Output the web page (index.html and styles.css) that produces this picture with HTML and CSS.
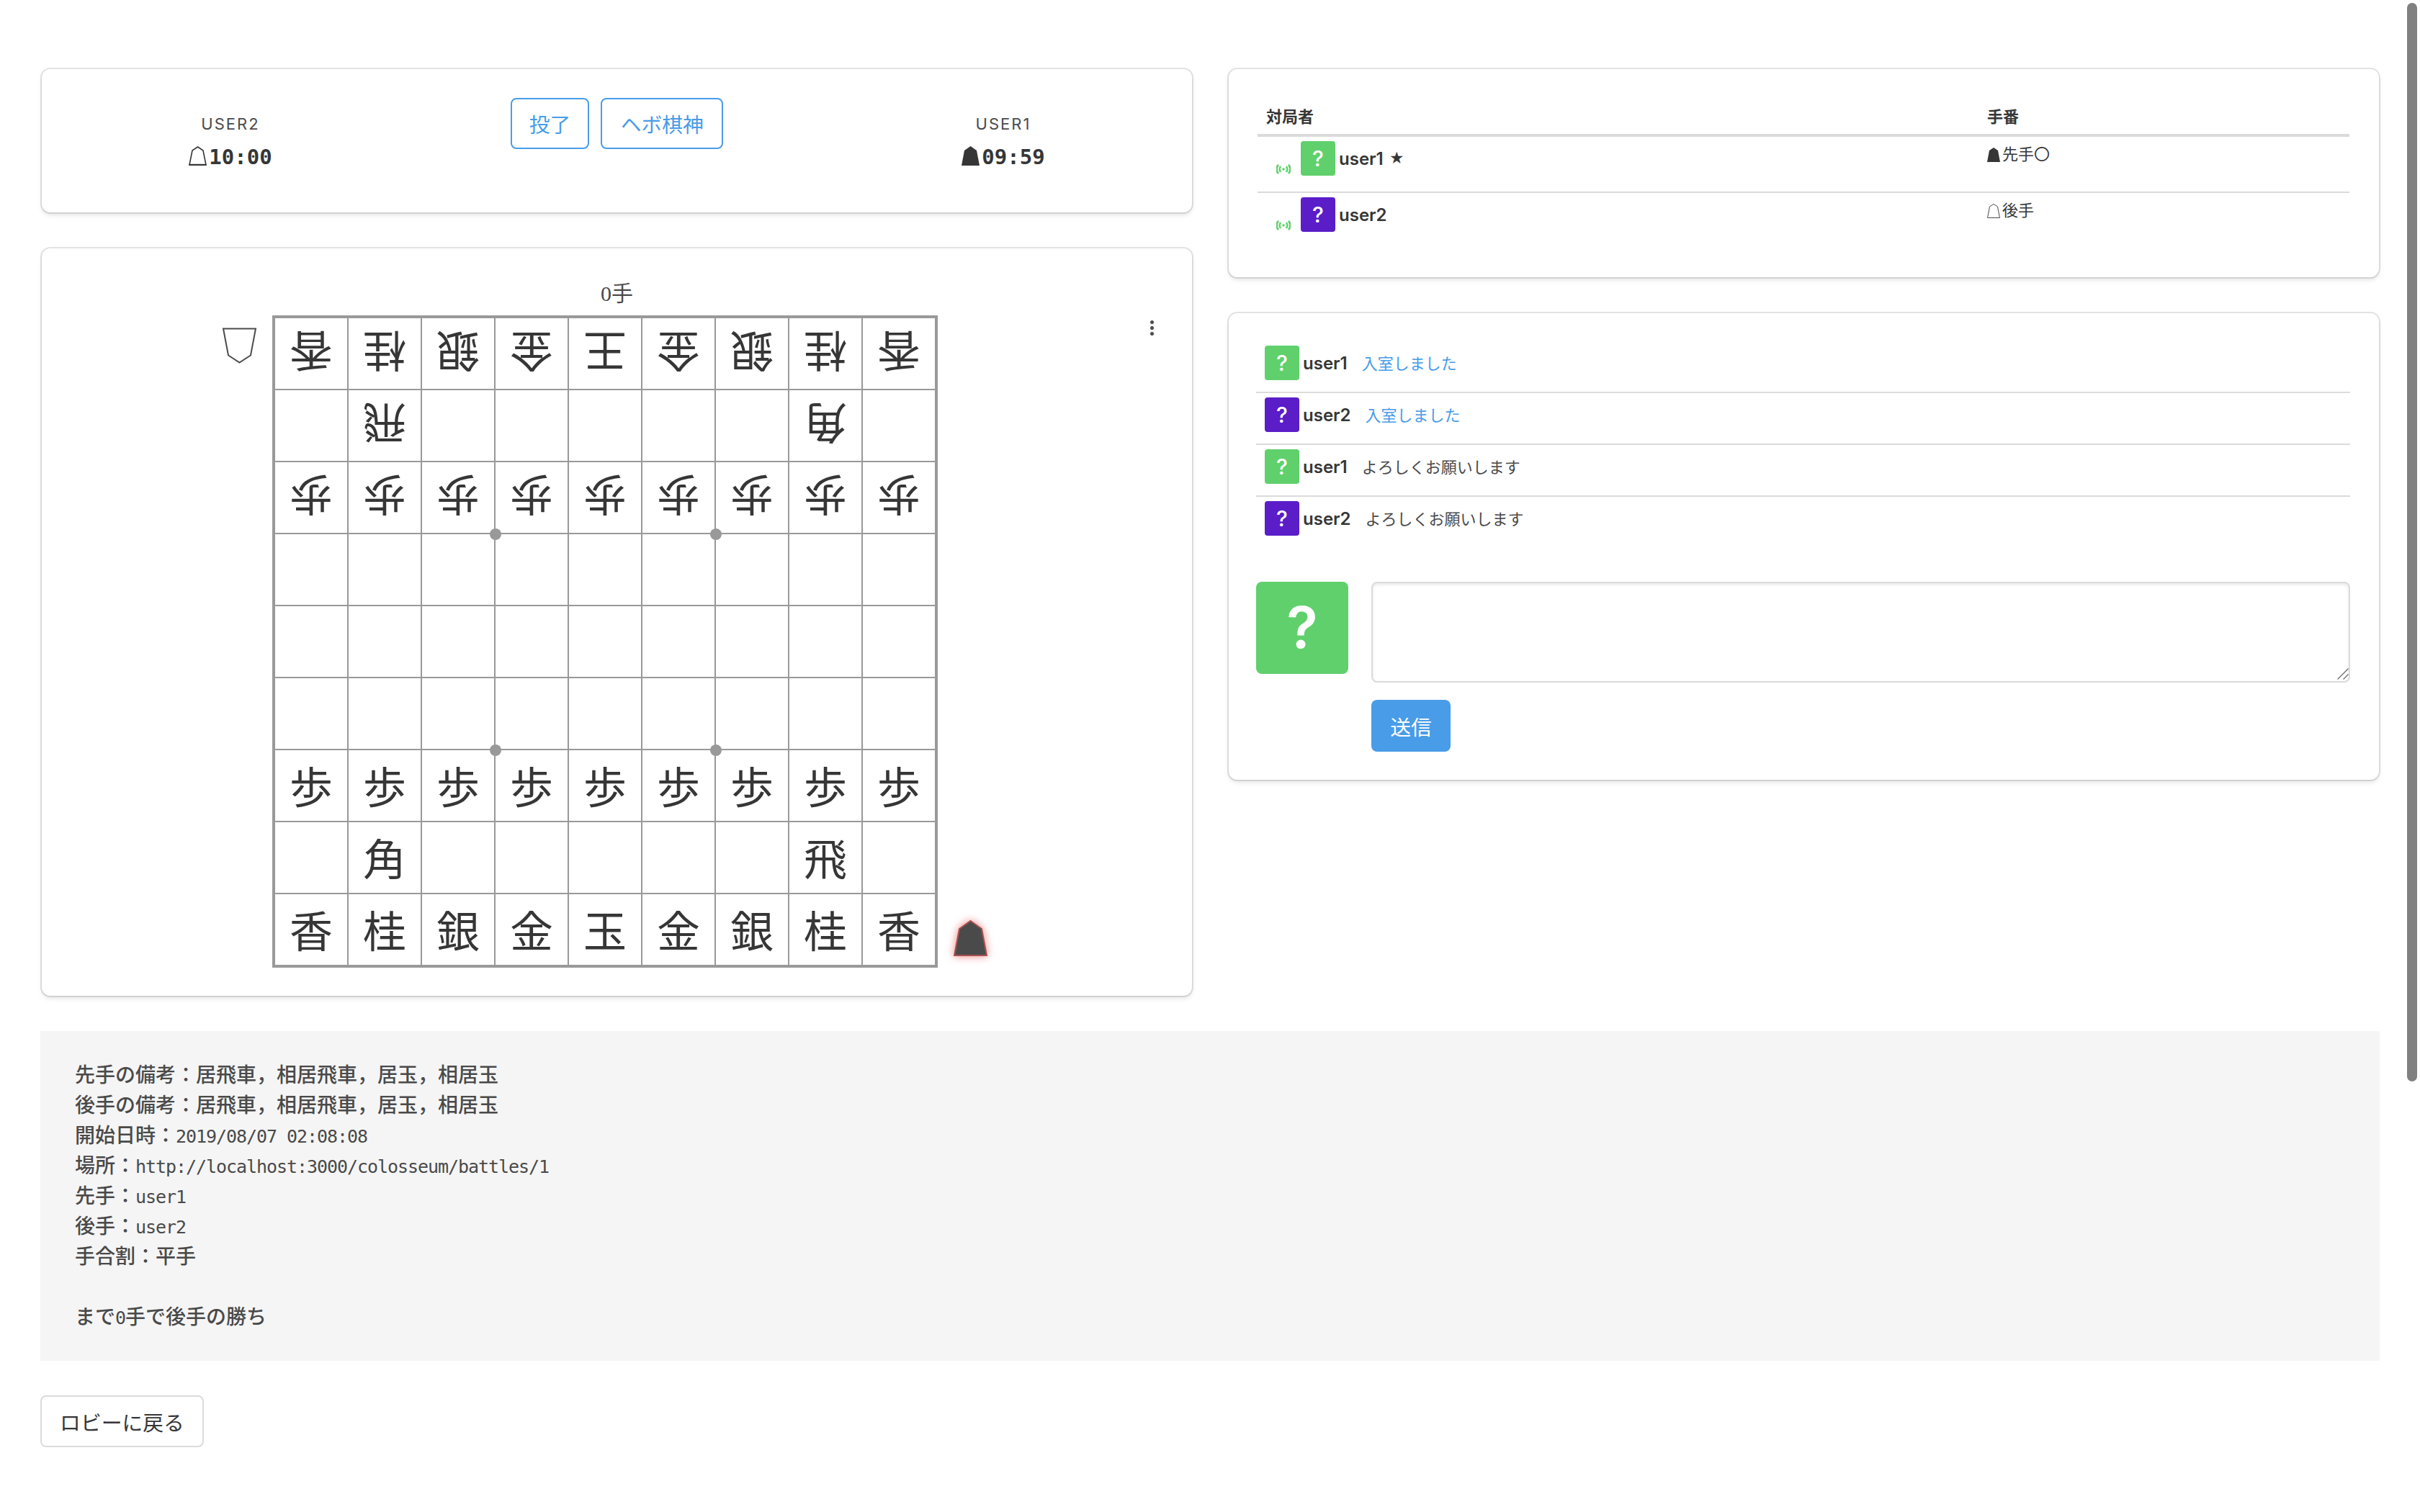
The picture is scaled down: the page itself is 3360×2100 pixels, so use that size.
FILE: index.html
```html
<!DOCTYPE html>
<html lang="ja">
<head>
  <meta charset="UTF-8">
  <meta name="viewport" content="width=device-width, initial-scale=1.0">
  <title>対局</title>
  <link rel="stylesheet" href="styles.css">
</head>
<body>
  <div class="scrollbar"></div>
  <div class="columns">
    <div class="column">
      <div class="card clock-card">
        <div class="player">
          <div class="player-name">USER2</div>
          <div class="player-time">
            <svg class="koma-time" viewBox="0 0 25 27"><polygon class="koma-open" points="12.5,1 20,6 24,26 1,26 5,6"/><path class="koma-base" d="M.5 26h24"/></svg>10:00
          </div>
        </div>
        <div class="buttons">
          <button class="button is-outlined">投了</button>
          <button class="button is-outlined is-wide">ヘボ棋神</button>
        </div>
        <div class="player">
          <div class="player-name">USER1</div>
          <div class="player-time">
            <svg class="koma-time" viewBox="0 0 25 27"><polygon class="koma-solid" points="12.5,0 21,6 25,27 0,27 4,6"/></svg>09:59
          </div>
        </div>
      </div>

      <div class="card board-card">
        <div class="turn-label">0手</div>
        <div class="board-row">
          <svg class="hand hand-white" viewBox="0 0 47 49"><polygon points="1,1 46,1 39,38 23.5,48 8,38"/></svg>
          <div class="board">
            <div class="sq w"><span>香</span></div><div class="sq w"><span>桂</span></div><div class="sq w"><span>銀</span></div><div class="sq w"><span>金</span></div><div class="sq w"><span>王</span></div><div class="sq w"><span>金</span></div><div class="sq w"><span>銀</span></div><div class="sq w"><span>桂</span></div><div class="sq w"><span>香</span></div>
            <div class="sq"></div><div class="sq w"><span>飛</span></div><div class="sq"></div><div class="sq"></div><div class="sq"></div><div class="sq"></div><div class="sq"></div><div class="sq w"><span>角</span></div><div class="sq"></div>
            <div class="sq w"><span>歩</span></div><div class="sq w"><span>歩</span></div><div class="sq w star"><span>歩</span></div><div class="sq w"><span>歩</span></div><div class="sq w"><span>歩</span></div><div class="sq w star"><span>歩</span></div><div class="sq w"><span>歩</span></div><div class="sq w"><span>歩</span></div><div class="sq w"><span>歩</span></div>
            <div class="sq"></div><div class="sq"></div><div class="sq"></div><div class="sq"></div><div class="sq"></div><div class="sq"></div><div class="sq"></div><div class="sq"></div><div class="sq"></div>
            <div class="sq"></div><div class="sq"></div><div class="sq"></div><div class="sq"></div><div class="sq"></div><div class="sq"></div><div class="sq"></div><div class="sq"></div><div class="sq"></div>
            <div class="sq"></div><div class="sq"></div><div class="sq star"></div><div class="sq"></div><div class="sq"></div><div class="sq star"></div><div class="sq"></div><div class="sq"></div><div class="sq"></div>
            <div class="sq"><span>歩</span></div><div class="sq"><span>歩</span></div><div class="sq"><span>歩</span></div><div class="sq"><span>歩</span></div><div class="sq"><span>歩</span></div><div class="sq"><span>歩</span></div><div class="sq"><span>歩</span></div><div class="sq"><span>歩</span></div><div class="sq"><span>歩</span></div>
            <div class="sq"></div><div class="sq"><span>角</span></div><div class="sq"></div><div class="sq"></div><div class="sq"></div><div class="sq"></div><div class="sq"></div><div class="sq"><span>飛</span></div><div class="sq"></div>
            <div class="sq"><span>香</span></div><div class="sq"><span>桂</span></div><div class="sq"><span>銀</span></div><div class="sq"><span>金</span></div><div class="sq"><span>玉</span></div><div class="sq"><span>金</span></div><div class="sq"><span>銀</span></div><div class="sq"><span>桂</span></div><div class="sq"><span>香</span></div>
          </div>
          <svg class="hand hand-black" viewBox="0 0 47 50"><polygon points="23.5,1 39,12 46,49 1,49 8,12"/></svg>
          <div class="kebab"><i></i><i></i><i></i></div>
        </div>
      </div>
    </div>

    <div class="column">
      <div class="card members-card">
        <table class="members">
          <thead>
            <tr><th class="col-name">対局者</th><th>手番</th></tr>
          </thead>
          <tbody>
            <tr>
              <td>
                <div class="member">
                  <svg class="online" viewBox="0 0 20 14"><circle cx="10" cy="7" r="1.8"/><path d="M6.2 3.2a5.5 5.5 0 0 0 0 7.6M13.8 3.2a5.5 5.5 0 0 1 0 7.6M3 .8a9.4 9.4 0 0 0 0 12.4M17 .8a9.4 9.4 0 0 1 0 12.4"/></svg>
                  <span class="avatar is-green">?</span>
                  <span class="name">user1</span><span class="star-mark">★</span>
                </div>
              </td>
              <td><svg class="koma-small" viewBox="0 0 18 20"><polygon class="koma-solid" points="9,0 15,4 18,20 0,20 3,4"/></svg>先手〇</td>
            </tr>
            <tr>
              <td>
                <div class="member">
                  <svg class="online" viewBox="0 0 20 14"><circle cx="10" cy="7" r="1.8"/><path d="M6.2 3.2a5.5 5.5 0 0 0 0 7.6M13.8 3.2a5.5 5.5 0 0 1 0 7.6M3 .8a9.4 9.4 0 0 0 0 12.4M17 .8a9.4 9.4 0 0 1 0 12.4"/></svg>
                  <span class="avatar is-purple">?</span>
                  <span class="name">user2</span>
                </div>
              </td>
              <td><svg class="koma-small" viewBox="0 0 18 20"><polygon class="koma-thin" points="9,.5 14.5,4 17.5,19.5 .5,19.5 3.5,4"/></svg>後手</td>
            </tr>
          </tbody>
        </table>
      </div>

      <div class="card chat-card">
        <div class="messages">
          <div class="message"><span class="avatar is-green">?</span><span class="name">user1</span><span class="text is-info">入室しました</span></div>
          <div class="message"><span class="avatar is-purple">?</span><span class="name">user2</span><span class="text is-info">入室しました</span></div>
          <div class="message"><span class="avatar is-green">?</span><span class="name">user1</span><span class="text">よろしくお願いします</span></div>
          <div class="message"><span class="avatar is-purple">?</span><span class="name">user2</span><span class="text">よろしくお願いします</span></div>
        </div>
        <div class="chat-form">
          <span class="avatar avatar-large is-green">?</span>
          <div class="chat-input">
            <div class="textarea-wrap">
              <textarea class="textarea"></textarea>
              <svg class="grip" viewBox="0 0 16 16"><path d="M.5 15.5 15.5.5M8.5 15.5l7-7"/></svg>
            </div>
            <button class="button is-info-fill">送信</button>
          </div>
        </div>
      </div>
    </div>
  </div>

  <pre class="kifu">先手の備考：居飛車，相居飛車，居玉，相居玉
後手の備考：居飛車，相居飛車，居玉，相居玉
開始日時：<span class="latin">2019/08/07 02:08:08</span>
場所：<span class="latin">http://localhost:3000/colosseum/battles/1</span>
先手：<span class="latin">user1</span>
後手：<span class="latin">user2</span>
手合割：平手

まで<span class="latin">0</span>手で後手の勝ち</pre>

  <button class="button back-button">ロビーに戻る</button>
</body>
</html>
```

FILE: styles.css
```css
html {
    overflow: hidden;
}
body {
    margin: 0;
    padding: 94px 0 0 56px;
    font-family: Inter, "Noto Sans CJK JP", sans-serif;
    color: #4a4a4a;
    background: #fff;
}
.scrollbar {
    position: fixed;
    top: 4px;
    right: 4px;
    width: 14px;
    height: 1498px;
    border-radius: 7px;
    background: #808080;
}
.columns {
    display: grid;
    grid-template-columns: 1601px 1601px;
    column-gap: 47px;
}
.card {
    margin: 2px 2px 50px;
    background: #fff;
    border-radius: 12px;
    box-shadow: 0 4px 6px rgba(10, 10, 10, 0.1), 0 0 0 2px rgba(10, 10, 10, 0.11);
}
.column .card:last-child {
    margin-bottom: 2px;
}

/* buttons */
.button {
    box-sizing: border-box;
    height: 71px;
    padding: 0 24px;
    font-family: inherit;
    font-size: 28.8px;
    border: 2px solid #dbdbdb;
    border-radius: 8px;
    background: #fff;
    color: #363636;
}
.button.is-outlined {
    border-color: #489ce8;
    color: #489ce8;
}
.button.is-wide {
    min-width: 170px;
}
.button.is-info-fill {
    width: 110px;
    height: 72px;
    margin-top: 24px;
    padding: 0;
    border-color: transparent;
    background: #489ce8;
    color: #fff;
}
.back-button {
    display: block;
    width: 227px;
    height: 72px;
    margin-top: 48px;
    padding: 0;
}

/* clocks */
.clock-card {
    display: grid;
    grid-template-columns: 524px 1fr 524px;
    height: 199px;
    padding-top: 40px;
    box-sizing: border-box;
}
.buttons {
    display: flex;
    justify-content: center;
    gap: 16px;
}
.player {
    padding-top: 21px;
    text-align: center;
}
.player-name {
    font-size: 22px;
    line-height: 30px;
    letter-spacing: 2px;
}
.player-time {
    display: flex;
    justify-content: center;
    align-items: flex-end;
    margin-top: 13px;
    font-family: "DejaVu Sans Mono", monospace;
    font-size: 29px;
    font-weight: bold;
    line-height: 36px;
    color: #363636;
}
.koma-time {
    width: 25px;
    height: 27px;
    margin: 0 3px 6px 0;
}
.koma-open {
    fill: #fff;
    stroke: #363636;
    stroke-width: 1.6;
}
.koma-base {
    fill: none;
    stroke: #363636;
    stroke-width: 2.4;
}
.koma-solid {
    fill: #363636;
}
.koma-thin {
    fill: #fff;
    stroke: #4a4a4a;
    stroke-width: 1;
}

/* board */
.board-card {
    box-sizing: border-box;
    height: 1038px;
    padding-top: 42px;
}
.turn-label {
    font-family: "Liberation Serif", "Noto Sans CJK JP", serif;
    font-size: 30px;
    line-height: 42px;
    text-align: center;
}
.board-row {
    display: flex;
    margin-top: 9px;
    padding-left: 251px;
}
.hand {
    flex: none;
    width: 47px;
    height: 50px;
}
.hand-white {
    margin: 17px 22px 0 0;
}
.hand-white polygon {
    fill: #fff;
    stroke: #4a4a4a;
    stroke-width: 2;
}
.hand-black {
    align-self: flex-end;
    margin: 0 0 16px 22px;
    overflow: visible;
    filter: drop-shadow(0 0 6px rgba(230, 40, 40, 0.6));
}
.hand-black polygon {
    fill: #4a4a4a;
    stroke: #a85050;
    stroke-width: 2;
}
.board {
    display: grid;
    grid-template-columns: repeat(8, 102px) 100px;
    grid-template-rows: repeat(8, 100px) 98px;
    border: 4px solid #999;
    font-family: "Noto Sans CJK JP", serif;
    font-size: 60px;
    color: #363636;
}
.sq {
    position: relative;
    box-sizing: border-box;
    display: flex;
    align-items: center;
    justify-content: center;
    border-right: 2px solid #999;
    border-bottom: 2px solid #999;
    line-height: 1;
}
.sq:nth-child(9n) {
    border-right: 0;
}
.sq:nth-last-child(-n+9) {
    border-bottom: 0;
}
.sq span {
    margin-bottom: 3px;
}
.sq.w span {
    margin-bottom: 0;
    transform: rotate(180deg);
}
.star::after {
    content: "";
    position: absolute;
    right: -10px;
    bottom: -10px;
    width: 16px;
    height: 16px;
    border-radius: 50%;
    background: #999;
}
.kebab {
    display: flex;
    flex-direction: column;
    gap: 3px;
    margin: 7px 0 0 auto;
    padding-right: 53px;
}
.kebab i {
    width: 5px;
    height: 5px;
    border-radius: 50%;
    background: #4a4a4a;
}

/* members table */
.members-card {
    box-sizing: border-box;
    height: 289px;
    padding: 38px 0 0 40px;
}
.members {
    width: 1516px;
    border-collapse: collapse;
    table-layout: fixed;
    font-size: 22px;
    color: #363636;
}
.members th {
    height: 52px;
    padding: 0 12px;
    font-weight: bold;
    text-align: left;
    border-bottom: 4px solid #dbdbdb;
}
.members .col-name {
    width: 977px;
}
.members td {
    height: 76px;
    padding: 6px 12px 22px;
    box-sizing: border-box;
    vertical-align: top;
}
.members tbody tr:first-child td {
    border-bottom: 2px solid #dbdbdb;
}
.member {
    display: flex;
    align-items: center;
}
.online {
    align-self: flex-end;
    width: 20px;
    height: 14px;
    margin: 0 14px 2px 14px;
    fill: #60d06c;
    stroke: none;
}
.online path {
    fill: none;
    stroke: #60d06c;
    stroke-width: 2.6;
}
.koma-small {
    width: 18px;
    height: 20px;
    margin-right: 3px;
    vertical-align: -3px;
}
.avatar {
    flex: none;
    display: flex;
    align-items: center;
    justify-content: center;
    width: 48px;
    height: 48px;
    border-radius: 4px;
    font-family: Inter, sans-serif;
    font-size: 30px;
    font-weight: 500;
    color: #fff;
}
.avatar.is-green {
    background: #60d06c;
}
.avatar.is-purple {
    background: #5a1dc8;
}
.avatar-large {
    width: 128px;
    height: 128px;
    border-radius: 8px;
    font-size: 80px;
    font-weight: 600;
    line-height: 1;
    padding-bottom: 2px;
    box-sizing: border-box;
}
.name {
    margin-left: 5px;
    font-size: 24px;
    font-weight: 600;
    color: #363636;
}
.star-mark {
    margin-left: 8px;
    font-size: 20px;
}

/* chat */
.chat-card {
    box-sizing: border-box;
    height: 648px;
    padding: 39px 40px 0 38px;
}
.message {
    display: flex;
    align-items: center;
    padding: 6px 12px 16px;
    border-bottom: 2px solid #dbdbdb;
}
.message:last-child {
    border-bottom: 0;
}
.text {
    margin: 0 0 3px 20px;
    font-size: 22px;
}
.text.is-info {
    color: #489ce8;
}
.chat-form {
    display: flex;
    gap: 32px;
    margin-top: 48px;
}
.chat-input {
    flex: 1;
}
.textarea-wrap {
    position: relative;
}
.textarea {
    display: block;
    box-sizing: border-box;
    width: 100%;
    height: 140px;
    margin: 0;
    border: 2px solid #dbdbdb;
    border-radius: 8px;
    box-shadow: inset 0 2px 4px rgba(10, 10, 10, 0.1);
    resize: none;
    outline: none;
}
.grip {
    position: absolute;
    right: 2px;
    bottom: 4px;
    width: 16px;
    height: 16px;
    fill: none;
    stroke: #666;
    stroke-width: 1.2;
}

/* kifu */
.kifu {
    box-sizing: border-box;
    width: 3248px;
    height: 458px;
    margin: 47px 0 0;
    padding: 38px 48px 42px;
    background: #f5f5f5;
    font-family: "Noto Sans CJK JP", sans-serif;
    font-size: 28px;
    font-weight: 500;
    line-height: 42px;
    color: #4a4a4a;
}
.latin {
    font-family: "DejaVu Sans Mono", monospace;
    font-size: 25px;
    font-weight: 400;
    line-height: 1;
    letter-spacing: -1.05px;
}
```
